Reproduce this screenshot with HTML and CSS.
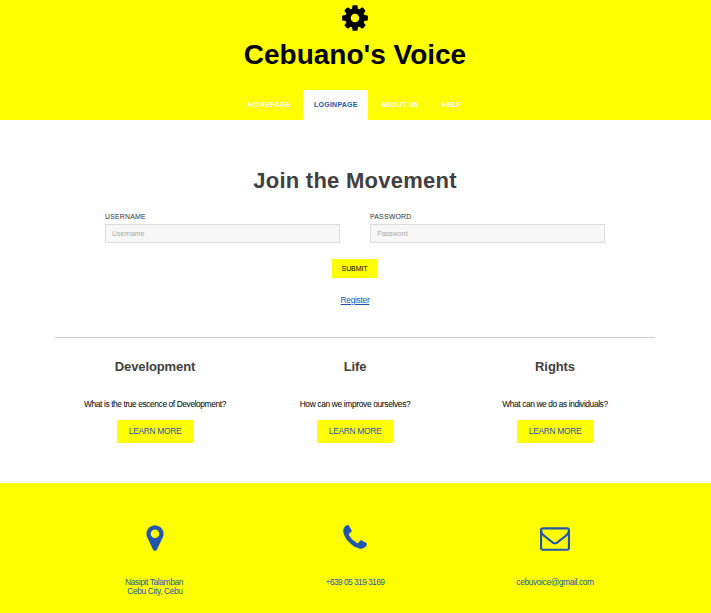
FILE: index.html
```html
<!DOCTYPE html>
<html lang="en">
<head>
<meta charset="utf-8">
<title>Cebuano's Voice</title>
<link rel="stylesheet" href="styles.css">
</head>
<body>
<header class="header">
  <svg class="icon cog" viewBox="0 0 1792 1792"><path d="M1152 896q0-106-75-181t-181-75-181 75-75 181 75 181 181 75 181-75 75-181zm512-109v222q0 12-8 23t-20 13l-185 28q-19 54-39 91 35 50 107 138 10 12 10 25t-9 23q-27 37-99 108t-94 71q-12 0-26-9l-138-108q-44 23-91 38-16 136-29 186-7 28-36 28h-222q-14 0-24.500-8.500t-11.500-21.500l-28-184q-49-16-90-37l-141 107q-10 9-25 9-14 0-25-11-126-114-165-168-7-10-7-23 0-12 8-23 15-21 51-66.500t54-70.500q-27-50-41-99l-183-27q-13-2-21-12.500t-8-23.500v-222q0-12 8-23t19-13l186-28q14-46 39-92-40-57-107-138-10-12-10-24 0-10 9-23 26-36 98.500-107.500t94.500-71.500q13 0 26 10l138 107q44-23 91-38 16-136 29-186 7-28 36-28h222q14 0 24.500 8.500t11.500 21.500l28 184q49 16 90 37l142-107q9-9 24-9 13 0 25 10 129 119 165 170 7 8 7 22 0 12-8 23-15 21-51 66.500t-54 70.500q26 50 41 98l183 28q13 2 21 12.500t8 23.500z"/></svg>
  <h1 class="title">Cebuano's Voice</h1>
  <nav class="nav">
    <a class="tab home">HOMEPAGE</a>
    <a class="tab active">LOGINPAGE</a>
    <a class="tab about">ABOUT US</a>
    <a class="tab help">HELP</a>
  </nav>
</header>
<main class="main">
  <h2 class="join">Join the Movement</h2>
  <form class="form">
    <div class="fields">
      <label class="field"><span class="label">USERNAME</span><span class="input">Username</span></label>
      <label class="field"><span class="label">PASSWORD</span><span class="input">Password</span></label>
    </div>
    <button class="submit" type="button">SUBMIT</button>
    <a class="register">Register</a>
  </form>
  <section class="topics">
    <article class="topic"><h3>Development</h3><p>What is the true escence of Development?</p><a class="more">LEARN MORE</a></article>
    <article class="topic"><h3>Life</h3><p class="q2">How can we improve ourselves?</p><a class="more">LEARN MORE</a></article>
    <article class="topic"><h3>Rights</h3><p>What can we do as individuals?</p><a class="more">LEARN MORE</a></article>
  </section>
</main>
<footer class="footer">
  <div class="contact">
    <svg class="icon" viewBox="0 0 1792 1792"><path d="M1152 640q0-106-75-181t-181-75-181 75-75 181 75 181 181 75 181-75 75-181zm256 0q0 109-33 179l-364 774q-16 33-47.500 52t-67.500 19-67.500-19-46.500-52l-365-774q-33-70-33-179 0-212 150-362t362-150 362 150 150 362z"/></svg>
    <p class="address">Nasipit Talamban<br>&nbsp;Cebu City, Cebu</p>
  </div>
  <div class="contact">
    <svg class="icon" viewBox="0 0 1792 1792"><path d="M1600 1240q0 27-10 70.500t-21 68.500q-21 50-122 106-94 51-186 51-27 0-53-3.500t-57.500-12.500-47-14.500-55.500-20.500-49-18q-98-35-175-83-127-79-264-216t-216-264q-48-77-83-175-3-9-18-49t-20.500-55.500-14.500-47-12.500-57.500-3.500-53q0-92 51-186 56-101 106-122 25-11 68.500-21t70.500-10q14 0 21 3 18 6 53 76 11 19 30 54t35 63.500 31 53.500q3 4 17.500 25t21.500 35.500 7 28.500q0 20-28.500 50t-62 55-62 53-28.500 46q0 9 5 22.500t8.500 20.500 14 24 11.500 19q76 137 174 235t235 174q2 1 19 11.500t24 14 20.500 8.500 22.500 5q18 0 46-28.500t53-62 55-62 50-28.500q14 0 28.500 7t35.500 21.500 25 17.500q25 15 53.500 31t63.500 35 54 30q70 35 76 53 3 7 3 21z"/></svg>
    <p class="phone">+639 05 319 3169</p>
  </div>
  <div class="contact">
    <svg class="icon" viewBox="0 0 1792 1792"><path d="M1664 1504v-768q-32 36-69 66-268 206-426 338-51 43-83 67t-86.500 48.500-102.500 24.500h-2q-48 0-102.500-24.500t-86.500-48.500-83-67q-158-132-426-338-37-30-69-66v768q0 13 9.500 22.500t22.500 9.500h1472q13 0 22.500-9.500t9.500-22.500zm0-1051v-24.500l-.5-13-3-12.500-5.500-9-9-7.500-14-2.500h-1472q-13 0-22.500 9.500t-9.500 22.500q0 168 147 284 193 152 401 317 6 5 35 29.500t46 37.500 44.500 31.500 50.500 27.500 43 9h2q20 0 43-9t50.500-27.500 44.500-31.500 46-37.500 35-29.500q208-165 401-317 54-43 100.500-115.500t46.500-131.500zm128-37v1088q0 66-47 113t-113 47h-1472q-66 0-113-47t-47-113v-1088q0-66 47-113t113-47h1472q66 0 113 47t47 113z"/></svg>
    <p>cebuvoice@gmail.com</p>
  </div>
</footer>
</body>
</html>
```
FILE: styles.css
```css
* { box-sizing: border-box; }
body { margin: 0; font-family: "Liberation Sans", Arial, sans-serif; background: #fff; color: #000; font-size: 8.4px; }
h1, h2, h3, p { margin: 0; white-space: nowrap; }
.icon { display: block; width: 30px; height: 30px; fill: #2155b0; }

.header { height: 120px; background: #ff0; padding: 2.5px 1px 0 0; display: flex; flex-direction: column; align-items: center; }
.cog { fill: #000; }
.title { font-size: 28px; line-height: 32px; margin-top: 6px; }
.nav { display: flex; margin-top: auto; height: 30px; align-self: flex-start; margin-left: 238px; }
.tab { color: #fff; font-size: 7px; font-weight: bold; line-height: 30px; padding-left: 10px; white-space: nowrap; letter-spacing: .25px; }
.home { width: 65px; }
.active { width: 65px; background: #fff; color: #2155b0; border-radius: 3px 3px 0 0; padding-left: 11px; }
.about { width: 61px; padding-left: 13px; letter-spacing: .1px; }
.help { width: 50px; padding-left: 13px; letter-spacing: .1px; }

.main { width: 600px; margin-left: 55px; height: 363px; padding-top: 48px; }
.join { font-size: 22px; line-height: 26px; text-align: center; color: #404040; letter-spacing: .25px; }
.form { height: 144px; border-bottom: 1px solid #ccc; padding: 18px 50px 0; display: flex; flex-direction: column; align-items: center; }
.fields { display: flex; gap: 30px; width: 500px; }
.field { flex: 1; display: flex; flex-direction: column; }
.label { font-size: 7px; line-height: 9px; color: #333; margin-bottom: 3px; letter-spacing: .15px; }
.input { height: 19px; border: 1px solid #ddd; background: #f7f7f7; padding-left: 6px; line-height: 17px; font-size: 7px; color: #aaa; }
.submit { margin: 16px 1px 0 0; width: 45px; height: 19px; border: 0; padding: 0; background: #ff0; color: #000; font: 7px/19px "Liberation Sans", Arial, sans-serif; letter-spacing: -.1px; }
.register { margin-top: 17px; line-height: 11px; letter-spacing: -.3px; color: #2155b0; text-decoration: underline; text-underline-offset: 1px; }
.topics { display: grid; grid-template-columns: repeat(3, 200px); }
.topic { display: flex; flex-direction: column; align-items: center; padding-top: 21px; }
.topic h3 { font-size: 13px; line-height: 16px; color: #404040; letter-spacing: -.1px; }
.topic p { margin-top: 24px; line-height: 11px; letter-spacing: -.4px; }
.topic .q2 { letter-spacing: -.34px; }
.more { margin-top: 10px; width: 76px; height: 23px; background: #ff0; color: #2155b0; line-height: 23px; text-align: center; letter-spacing: -.3px; }

.footer { height: 130px; background: #ff0; padding: 40px 56px 0 55px; display: grid; grid-template-columns: repeat(3, 200px); color: #2155b0; text-align: center; }
.contact { display: flex; flex-direction: column; align-items: center; }
.contact p { margin-top: 25px; line-height: 9px; letter-spacing: -.37px; }
.contact .address { margin-right: 2px; }
.contact .phone { letter-spacing: -.56px; }
```
